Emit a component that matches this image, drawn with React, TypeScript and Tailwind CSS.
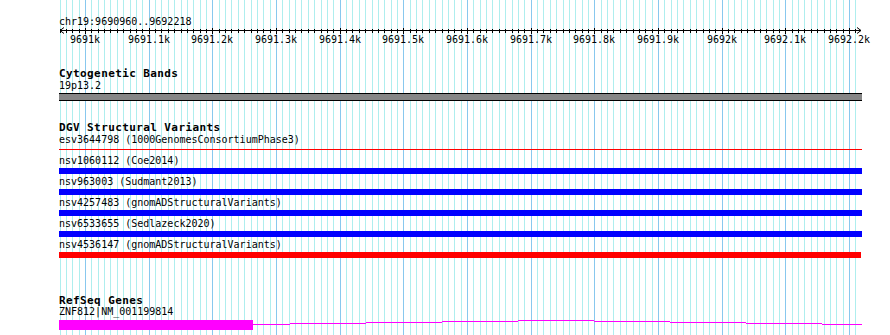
const START = 9691000;
const ORIGIN = 85;
const SCALE = 0.636667;
const LEFT = 59;

const xOf = (bp: number) => ORIGIN + (bp - START) * SCALE;

const gridLines = Array.from({ length: 126 }, (_, i) => i - 4)
  .map((k) => ({ x: Math.round(xOf(START + k * 10)), major: k % 10 === 0 }))
  .filter((l) => l.x >= LEFT && l.x <= 858);

const rulerLabels = Array.from({ length: 13 }, (_, m) => START + m * 100).map((bp) => ({
  x: Math.round(xOf(bp)) - LEFT,
  text: (bp / 1000).toFixed(1).replace(/\.0$/, "") + "k",
}));

const variants = [
  { label: "nsv1060112 (Coe2014)", color: "bg-[#0000ff]" },
  { label: "nsv963003 (Sudmant2013)", color: "bg-[#0000ff]" },
  { label: "nsv4257483 (gnomADStructuralVariants)", color: "bg-[#0000ff]" },
  { label: "nsv6533655 (Sedlazeck2020)", color: "bg-[#0000ff]" },
  { label: "nsv4536147 (gnomADStructuralVariants)", color: "bg-[#ff0000] w-[802px]" },
];

// intron connector, drawn in page x, y offset from exon top
const intron = [
  [253, 290, 4],
  [290, 366, 3],
  [366, 442, 2],
  [442, 518, 1],
  [518, 594, 0],
  [594, 670, 1],
  [670, 746, 2],
  [746, 822, 3],
  [822, 862, 4],
];

const Grid = () => (
  <svg className="absolute inset-0" width={890} height={335} shapeRendering="crispEdges">
    {gridLines.map((l) => (
      <rect key={l.x} x={l.x} y={0} width={1} height={335} fill={l.major ? "#88c8ee" : "#aeeeee"} />
    ))}
  </svg>
);

const Ruler = () => (
  <svg width={803} height={18} className="block overflow-visible">
    <g shapeRendering="crispEdges">
      <rect x={1} y={2} width={801} height={1} fill="#000" />
      {gridLines.map((l) => (
        <rect key={l.x} x={l.x - LEFT} y={l.major ? 0 : 1} width={1} height={l.major ? 6 : 4} fill="#000" />
      ))}
    </g>
    <polyline points="5,-0.5 1,2.5 5,5.5" fill="none" stroke="#000" strokeWidth={1} />
    <polyline points="798,-0.5 802,2.5 798,5.5" fill="none" stroke="#000" strokeWidth={1} />
    {rulerLabels.map((l) => (
      <text
        key={l.text}
        x={l.x}
        y={15}
        textAnchor="middle"
        fontSize={10}
        fontFamily="'DejaVu Sans Mono', monospace"
        fill="#000"
      >
        {l.text}
      </text>
    ))}
  </svg>
);

const Title = ({ children }: { children: string }) => (
  <div className="h-[14px] text-[11px] leading-[14px] font-bold tracking-[0.4px]">{children}</div>
);

const Label = ({ children, tight }: { children: string; tight?: boolean }) => (
  <div className={tight ? "h-[12px] leading-[8px] whitespace-pre" : "h-[12px] leading-[10px] whitespace-pre"}>
    {children}
  </div>
);

export default function App() {
  return (
    <div className="relative h-[335px] w-[890px] overflow-hidden bg-white font-['DejaVu_Sans_Mono',monospace] text-[10px] leading-[12px] text-black">
      <Grid />
      <div className="relative ml-[59px] flex w-[803px] flex-col pt-[16px]">
        <div className="h-[12px] whitespace-pre">chr19:9690960..9692218</div>
        <Ruler />

        <div className="mt-[21px] flex flex-col">
          <Title>Cytogenetic Bands</Title>
          <Label>19p13.2</Label>
          <div className="h-[8px] border-y border-black bg-[#868686]" />
        </div>

        <div className="mt-[20px] flex flex-col">
          <Title>DGV Structural Variants</Title>
          <div className="flex flex-col gap-[3px]">
            <div className="flex flex-col">
              <Label>esv3644798 (1000GenomesConsortiumPhase3)</Label>
              <div className="h-[6px] pt-[2px]">
                <div className="h-px bg-[#ff0000]" />
              </div>
            </div>
            {variants.map((v) => (
              <div key={v.label} className="flex flex-col">
                <Label>{v.label}</Label>
                <div className={`h-[6px] ${v.color}`} />
              </div>
            ))}
          </div>
        </div>

        <div className="mt-[36px] flex flex-col">
          <Title>RefSeq Genes</Title>
          <Label tight>ZNF812|NM_001199814</Label>
          <div className="flex h-[10px]">
            <div className="h-[10px] w-[194px] bg-[#ff00ff]" />
            <svg width={609} height={10} shapeRendering="crispEdges">
              {intron.map(([a, b, dy]) => (
                <rect key={a} x={a - 253} y={dy} width={b - a} height={1} fill="#ff00ff" />
              ))}
            </svg>
          </div>
        </div>
      </div>
    </div>
  );
}
